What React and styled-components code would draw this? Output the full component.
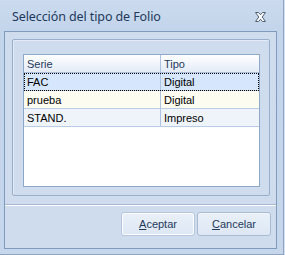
import React from 'react';
import styled, { createGlobalStyle } from 'styled-components';

const GlobalStyle = createGlobalStyle`
  html, body {
    margin: 0;
    padding: 0;
    background: #d3e0ef;
  }
  * {
    box-sizing: border-box;
  }
`;

const Window = styled.div`
  width: 284px;
  height: 255px;
  display: flex;
  flex-direction: column;
  background: linear-gradient(#cbdaee, #c3d5eb 30px, #c6d7ec);
  border-right: 1px solid #8ea4c0;
  border-bottom: 1px solid #8ea4c0;
  font-family: "Liberation Sans", Arial, sans-serif;
`;

const TitleBar = styled.div`
  height: 31px;
  flex-shrink: 0;
  display: flex;
  align-items: center;
  justify-content: space-between;
  padding: 2px 16px 0 12px;
`;

const Title = styled.span`
  font-family: "Noto Sans", "Open Sans", sans-serif;
  font-size: 12.5px;
  color: #1e395b;
  letter-spacing: -0.1px;
`;

const CloseButton = styled.button`
  border: 0;
  background: none;
  padding: 0;
  width: 14px;
  height: 12px;
  display: flex;
  align-items: center;
  justify-content: center;
`;

const Body = styled.div`
  margin: 0 6px 0 4px;
  height: 218px;
  border: 1px solid #7f9bbd;
  background: #cfdced;
  display: flex;
  flex-direction: column;
`;

const GroupBox = styled.div`
  margin: 7px 6px 0 7px;
  height: 157px;
  border: 1px solid #98aecb;
  border-radius: 2px;
  box-shadow: inset 1px 1px 0 #e2ebf6;
  padding: 14px 10px 8px 10px;
`;

const Grid = styled.div`
  height: 133px;
  width: 237px;
  background: #ffffff;
  border: 1px solid #8ea8c8;
  display: flex;
  flex-direction: column;
`;

const Row = styled.div`
  display: grid;
  grid-template-columns: 137px 1fr;
  height: 18px;
  flex-shrink: 0;
  background: ${({ bg }) => bg};
  border-bottom: 1px solid #b9cde7;
  outline: ${({ focused }) => (focused ? '1px dotted #000' : 'none')};
  outline-offset: -1px;
`;

const HeaderRow = styled(Row)`
  background: linear-gradient(#ffffff, #eef3fa 60%, #e3ebf6);
  border-bottom: 1px solid #a9bfdc;
`;

const Cell = styled.div`
  display: flex;
  align-items: center;
  padding-left: 3px;
  font-size: 11px;
  color: ${({ header }) => (header ? '#1e395b' : '#000')};
  border-right: ${({ last }) => (last ? 'none' : '1px solid #aec3df')};
  white-space: nowrap;
`;

const Separator = styled.div`
  margin-top: 8px;
  height: 2px;
  border-top: 1px solid #a7b6ca;
  border-bottom: 1px solid #ffffff;
`;

const ButtonBar = styled.div`
  display: flex;
  justify-content: flex-end;
  gap: 2px;
  padding: 6px 5px 0 0;
`;

const Button = styled.button`
  width: 74px;
  height: 24px;
  border: 1px solid ${({ primary }) => (primary ? '#b5c6dc' : '#a9bbd3')};
  border-radius: 3px;
  background: linear-gradient(#e9f0f9, #dde7f4);
  box-shadow: ${({ primary }) => (primary ? 'inset 0 0 0 1px #ffffff' : 'inset 0 1px 0 #f2f6fb')};
  font-family: "Liberation Sans", Arial, sans-serif;
  font-size: 11px;
  color: #1e395b;
  padding: 0;
  u {
    text-underline-offset: 1px;
  }
`;

const rows = [
  { serie: 'FAC', tipo: 'Digital', bg: '#d6e6fc', focused: true },
  { serie: 'prueba', tipo: 'Digital', bg: '#fdfcf1' },
  { serie: 'STAND.', tipo: 'Impreso', bg: '#eff4fb' },
];

function CloseIcon() {
  return (
    <svg width="13" height="10" viewBox="0 0 13 10">
      <path
        d="M1.5 0.5 H4.5 L6.5 2.8 L8.5 0.5 H11.5 L8.2 5 L11.5 9.5 H8.5 L6.5 7.2 L4.5 9.5 H1.5 L4.8 5 Z"
        fill="#ffffff"
        stroke="#4f5f74"
        strokeWidth="1"
        strokeLinejoin="round"
      />
    </svg>
  );
}

export default function App() {
  return (
    <>
      <GlobalStyle />
      <Window>
        <TitleBar>
          <Title>Selección del tipo de Folio</Title>
          <CloseButton aria-label="Cerrar">
            <CloseIcon />
          </CloseButton>
        </TitleBar>
        <Body>
          <GroupBox>
            <Grid>
              <HeaderRow>
                <Cell header>Serie</Cell>
                <Cell header last>Tipo</Cell>
              </HeaderRow>
              {rows.map((r) => (
                <Row key={r.serie} bg={r.bg} focused={r.focused}>
                  <Cell>{r.serie}</Cell>
                  <Cell last>{r.tipo}</Cell>
                </Row>
              ))}
            </Grid>
          </GroupBox>
          <Separator />
          <ButtonBar>
            <Button primary>
              <u>A</u>ceptar
            </Button>
            <Button>
              <u>C</u>ancelar
            </Button>
          </ButtonBar>
        </Body>
      </Window>
    </>
  );
}
